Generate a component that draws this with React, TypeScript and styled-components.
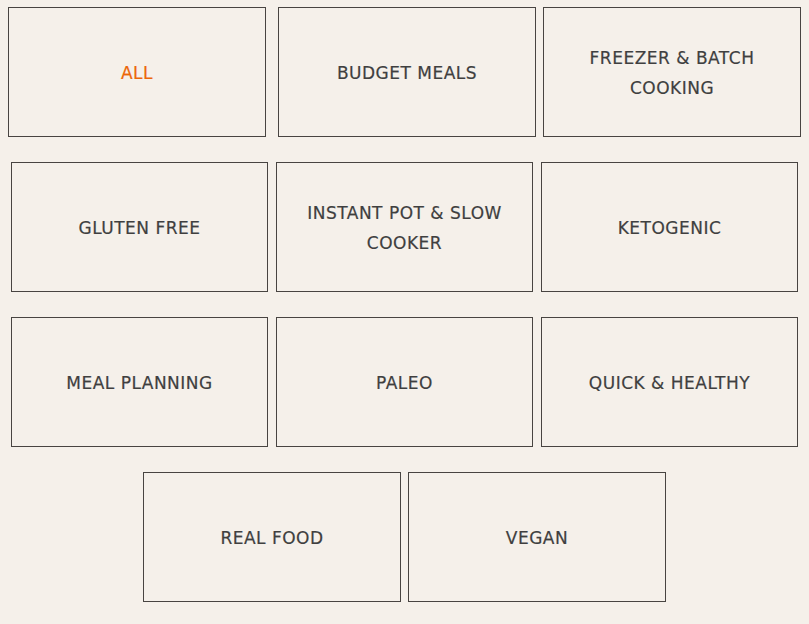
import React from "react";
import styled, { createGlobalStyle } from "styled-components";

const Global = createGlobalStyle`
  html, body { margin: 0; padding: 0; background: #f5f0ea; }
  body { font-family: "DejaVu Sans", "Liberation Sans", sans-serif; }
`;

const Page = styled.div`
  display: flex;
  flex-direction: column;
  gap: 25px;
  padding-top: 7px;
  width: 809px;
`;

const Row = styled.div<{ $gap: number }>`
  display: flex;
  justify-content: center;
  gap: ${(p) => p.$gap}px;
`;

const Tile = styled.a<{ $w: number; $active?: boolean; $extra?: number }>`
  box-sizing: border-box;
  width: ${(p) => p.$w}px;
  height: 130px;
  margin-right: ${(p) => p.$extra ?? 0}px;
  border: 1px solid #484441;
  display: flex;
  align-items: center;
  justify-content: center;
  padding: 2px 22px 0;
  text-align: center;
  text-transform: uppercase;
  font-size: 17px;
  line-height: 30px;
  letter-spacing: 0.5px;
  color: ${(p) => (p.$active ? "#ec6608" : "#3f3f3f")};
  -webkit-text-stroke: 0.2px currentColor;
  text-decoration: none;
  cursor: pointer;
`;

const rows: { gap: number; w: number; items: string[]; extraFirst?: number }[] = [
  { gap: 7, w: 258, items: ["All", "Budget Meals", "Freezer & Batch Cooking"], extraFirst: 5 },
  { gap: 8, w: 257, items: ["Gluten Free", "Instant Pot & Slow Cooker", "Ketogenic"] },
  { gap: 8, w: 257, items: ["Meal Planning", "Paleo", "Quick & Healthy"] },
  { gap: 7, w: 258, items: ["Real Food", "Vegan"] },
];

export default function App() {
  return (
    <>
      <Global />
      <Page>
        {rows.map((r, ri) => (
          <Row key={ri} $gap={r.gap}>
            {r.items.map((label, i) => (
              <Tile
                key={label}
                $w={r.w}
                $active={label === "All"}
                $extra={i === 0 ? r.extraFirst : 0}
              >
                {label}
              </Tile>
            ))}
          </Row>
        ))}
      </Page>
    </>
  );
}
